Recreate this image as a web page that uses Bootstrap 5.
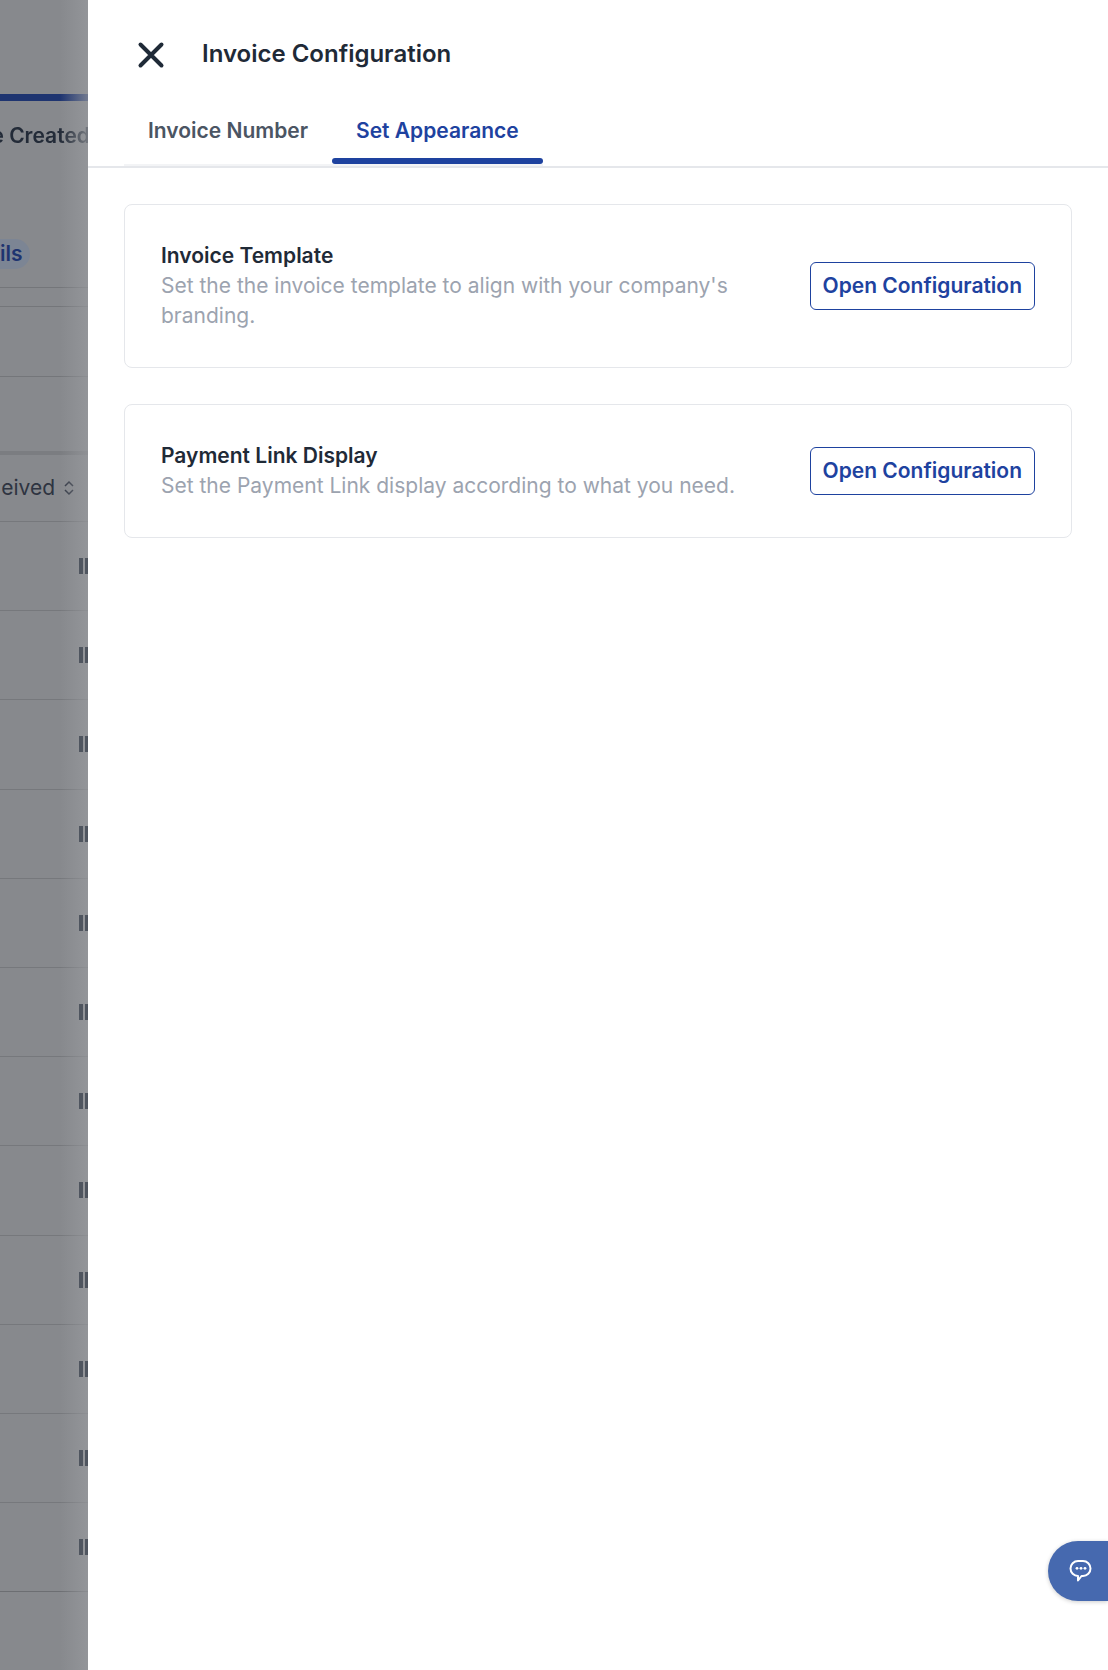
<!doctype html>
<html lang="en"><head><meta charset="utf-8">
<link href="https://cdn.jsdelivr.net/npm/bootstrap@5.3.0/dist/css/bootstrap.min.css" rel="stylesheet">
<style>
html,body{height:1670px;overflow:hidden}
body{font-family:Inter,"Liberation Sans",sans-serif;color:#1f2a37;background:#fff}
.stage{height:1670px}
.under{width:88px;flex:none;background:#87898d;overflow:hidden;position:relative}
.under::after{content:"";position:absolute;inset:0;background:linear-gradient(90deg,rgba(152,154,158,0) 60px,rgba(152,154,158,.7) 88px)}
.under-inner{width:88px;display:flex;flex-direction:column;align-items:stretch}
.u-top{height:101px;border-bottom:7px solid #1e3470}
.u-created{height:60px;font-size:21px;font-weight:600;color:#232b38;white-space:nowrap;overflow:hidden;padding-top:23px;line-height:24px;text-indent:-43px;filter:blur(.4px)}
.u-pill{height:127px;display:flex;align-items:flex-end;padding-bottom:18px}
.u-pill span{display:block;background:#7c8594;color:#1e3470;font-size:21px;font-weight:600;border-radius:0 15px 15px 0;width:30px;height:30px;line-height:30px;text-align:right;padding-right:9px}
.u-line{border-bottom:1px solid #74767a}
.u-a{height:19px}.u-b{height:70px}.u-c{height:78px;border-bottom:4px solid #7b7d81}
.u-head{height:67px;display:flex;align-items:center;justify-content:flex-end;gap:8px;padding-right:13px;font-size:21px;color:#2e3441;white-space:nowrap;border-bottom:1px solid #76787c}
.u-row{height:89.2px;border-bottom:1px solid #76787c;display:flex;align-items:center;justify-content:flex-end;gap:2px}
.u-row:last-child{border-bottom-color:#6c6e72}
.u-row i{display:block;width:4px;height:16px;background:#4f555f;position:relative;z-index:1}
.u-row i:last-child{width:3px}
.sheet{flex:1;min-width:0;position:relative}
.close-x{width:32px;height:32px;padding:0;border:0;background:none;margin:2px 0 0 47px;color:#1f2a37;line-height:0;flex:none}
.sheet-title{font-size:24px;font-weight:600;margin:0 0 0 35px;line-height:32px;color:#1f2a37}
.sheet-head{height:108px}
.tabs{height:60px;border-bottom:2px solid #e5e7eb;padding-left:36px}
.tab-strip{height:58px;border-bottom:2px solid #f3f4f6}
.tabbtn{font-size:21px;font-weight:600;color:#4b5563;padding:8px 24px 0;height:56px;line-height:30px;position:relative;text-decoration:none;display:block}
.tabbtn.on{color:#1e429f}
.tabbtn.on::after{content:"";position:absolute;left:0;right:0;bottom:0;height:6px;background:#1e429f;border-radius:3px}
.cfg{margin:36px 36px 0;gap:36px;display:flex;flex-direction:column}
.cfg-card{border:1px solid #e5e7eb;border-radius:8px;padding:36px;background:#fff;display:flex;align-items:center;justify-content:space-between;gap:36px}
.cfg-title{font-size:21px;font-weight:600;line-height:30px;color:#1f2a37}
.cfg-text{font-size:21px;line-height:30px;color:#9ca3af}
.open-btn{font-size:21px;font-weight:600;color:#1e429f;border:1px solid #1e429f;border-radius:6px;background:#fff;height:48px;padding:0 12px;line-height:44px;white-space:nowrap;flex:none}
.chat{position:absolute;right:0;top:1541px;width:60px;height:60px;background:#4669af;border-radius:30px 0 0 30px;box-shadow:0 1px 4px rgba(0,0,0,.2);display:flex;align-items:center;padding-left:20px}
</style></head>
<body>
<div class="stage d-flex">
 <div class="under" aria-hidden="true"><div class="under-inner">
  <div class="u-top"></div>
  <div class="u-created">Date Created</div>
  <div class="u-pill u-line"><span>ils</span></div>
  <div class="u-a u-line"></div><div class="u-b u-line"></div><div class="u-c"></div>
  <div class="u-head"><span>eived</span><svg width="12" height="16" viewBox="0 0 12 16" fill="none" stroke="#2e3441" stroke-width="1.5" class="flex-none"><path d="M2 6l4-4 4 4M2 10l4 4 4-4"/></svg></div>
  <div class="u-row"><i></i><i></i></div><div class="u-row"><i></i><i></i></div><div class="u-row"><i></i><i></i></div><div class="u-row"><i></i><i></i></div><div class="u-row"><i></i><i></i></div><div class="u-row"><i></i><i></i></div><div class="u-row"><i></i><i></i></div><div class="u-row"><i></i><i></i></div><div class="u-row"><i></i><i></i></div><div class="u-row"><i></i><i></i></div><div class="u-row"><i></i><i></i></div><div class="u-row"><i></i><i></i></div>
 </div></div>
 <div class="sheet">
  <div class="sheet-head d-flex align-items-center">
   <button class="close-x" aria-label="Close"><svg width="32" height="32" viewBox="0 0 32 32" fill="none" stroke="currentColor" stroke-width="4" stroke-linecap="round"><path d="M5.5 5.5l21 21M26.5 5.5l-21 21"/></svg></button>
   <h1 class="sheet-title">Invoice Configuration</h1>
  </div>
  <div class="tabs">
   <div class="tab-strip d-inline-flex">
    <a class="tabbtn" href="#">Invoice Number</a>
    <a class="tabbtn on" href="#">Set Appearance</a>
   </div>
  </div>
  <div class="cfg">
   <div class="cfg-card">
    <div><div class="cfg-title">Invoice Template</div><div class="cfg-text">Set the the invoice template to align with your company's branding.</div></div>
    <button class="btn open-btn">Open Configuration</button>
   </div>
   <div class="cfg-card">
    <div><div class="cfg-title">Payment Link Display</div><div class="cfg-text">Set the Payment Link display according to what you need.</div></div>
    <button class="btn open-btn">Open Configuration</button>
   </div>
  </div>
  <div class="chat"><svg width="24" height="24" viewBox="0 0 24 24" fill="none"><path d="M10 2h5a7.5 7.5 0 0 1 0 15h-1.5L10 21.5V17a7.5 7.5 0 0 1 0-15z" stroke="#fff" stroke-width="2" stroke-linejoin="round"/><circle cx="9" cy="9.3" r="1.4" fill="#fff"/><circle cx="13" cy="9.3" r="1.4" fill="#fff"/><circle cx="17" cy="9.3" r="1.4" fill="#fff"/></svg></div>
 </div>
</div>
<script src="https://cdn.jsdelivr.net/npm/bootstrap@5.3.0/dist/js/bootstrap.bundle.min.js"></script>
</body></html>
